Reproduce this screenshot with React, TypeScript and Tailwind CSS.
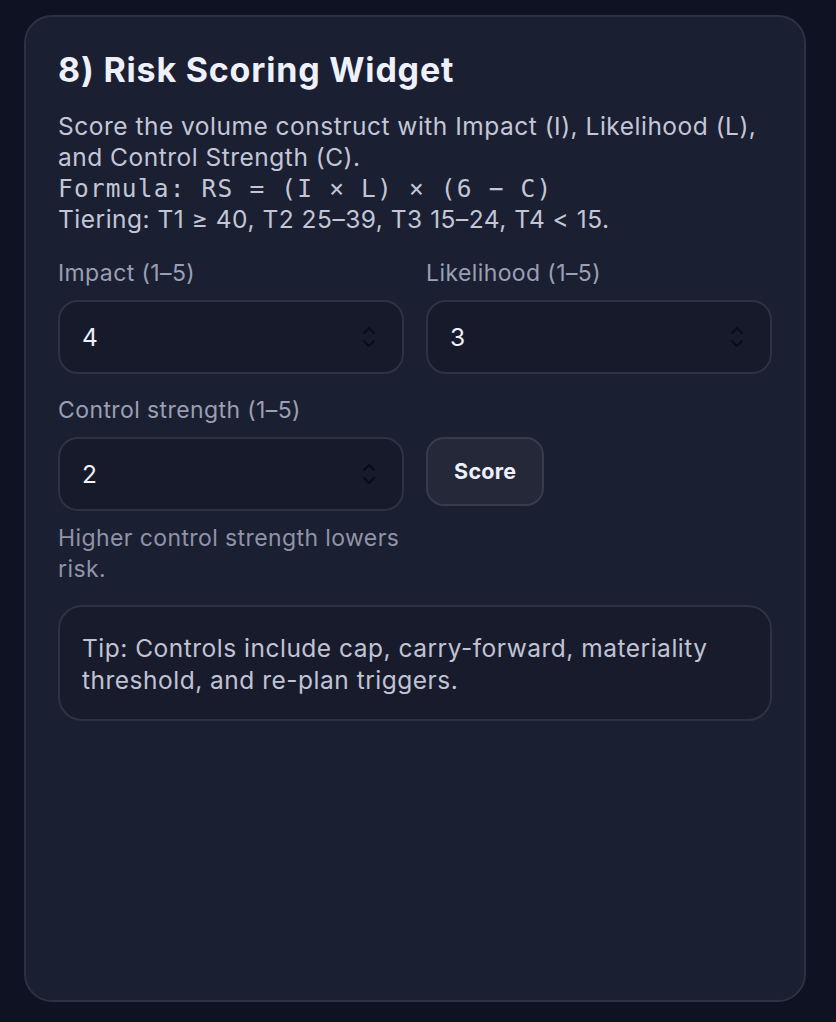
import { useState } from "react";

type FieldProps = {
    label: string;
    value: string;
    onChange: (v: string) => void;
};

function Spinner() {
    return (
        <svg width="14" height="26" viewBox="0 0 14 26" fill="none" className="shrink-0">
            <path d="M2 9 L7 4 L12 9" stroke="#090b15" strokeWidth="2" strokeLinecap="round" strokeLinejoin="round" />
            <path d="M2 17 L7 22 L12 17" stroke="#090b15" strokeWidth="2" strokeLinecap="round" strokeLinejoin="round" />
        </svg>
    );
}

function NumberField({ label, value, onChange }: FieldProps) {
    return (
        <label className="flex flex-col gap-[13px]">
            <span className="text-[23px] leading-[28px] tracking-[0.4px] text-[#9a9fb3]">{label}</span>
            <div className="flex items-center h-[74px] rounded-[20px] border-2 border-[#2d3244] bg-[#171a2a] pl-[22px] pr-[26px]">
                <input
                    type="number"
                    min={1}
                    max={5}
                    value={value}
                    onChange={(e) => onChange(e.target.value)}
                    className="flex-1 min-w-0 bg-transparent text-[24.5px] text-[#eef0fa] outline-none [appearance:textfield] [&::-webkit-inner-spin-button]:appearance-none [&::-webkit-outer-spin-button]:appearance-none"
                />
                <Spinner />
            </div>
        </label>
    );
}

export default function App() {
    const [impact, setImpact] = useState("4");
    const [likelihood, setLikelihood] = useState("3");
    const [control, setControl] = useState("2");

    return (
        <div className="min-h-[1022px] bg-[#0e1222] pt-[15px] pl-[24px] font-['Inter','Noto_Sans',sans-serif]">
            <section className="w-[782px] h-[987px] rounded-[28px] border-2 border-[#2c3144] bg-[#1b1f32] px-[32px] pt-[33px]">
                <h1 className="text-[34px] leading-[40px] font-bold text-[#eef0fb] tracking-[0.8px]">8) Risk Scoring Widget</h1>
                <p className="mt-[21px] text-[24.5px] leading-[31px] tracking-[0.5px] text-[#c3c6d6]">
                    Score the volume construct with Impact (I), Likelihood (L), and Control Strength (C).
                    <br />
                    <code className="font-['DejaVu_Sans_Mono',monospace] text-[24.5px] leading-[31px] tracking-[1.2px]">Formula: RS = (I × L) × (6 − C)</code>
                    <br />
                    Tiering: T1 ≥ 40, T2 25–39, T3 15–24, T4 &lt; 15.
                </p>

                <div className="mt-[24px] grid grid-cols-2 gap-x-[22px] gap-y-[22px]">
                    <NumberField label="Impact (1–5)" value={impact} onChange={setImpact} />
                    <NumberField label="Likelihood (1–5)" value={likelihood} onChange={setLikelihood} />
                    <div className="flex flex-col">
                        <NumberField label="Control strength (1–5)" value={control} onChange={setControl} />
                        <p className="mt-[12px] text-[23px] leading-[31px] tracking-[0.4px] text-[#8f94a8]">Higher control strength lowers risk.</p>
                    </div>
                    <div>
                        <button className="mt-[41px] h-[69px] px-[26px] rounded-[18px] border-2 border-[#363b4e] bg-[#242839] text-[21.5px] tracking-[0.3px] font-bold text-[#eef0fa]">
                            Score
                        </button>
                    </div>
                </div>

                <div className="mt-[20px] rounded-[24px] border-2 border-[#2d3244] bg-[#181b2c] px-[22px] pt-[25px] pb-[23px]">
                    <p className="text-[24.5px] leading-[32px] tracking-[0.5px] text-[#c0c3d3]">
                        Tip: Controls include cap, carry-forward, materiality threshold, and re-plan triggers.
                    </p>
                </div>
            </section>
        </div>
    );
}
